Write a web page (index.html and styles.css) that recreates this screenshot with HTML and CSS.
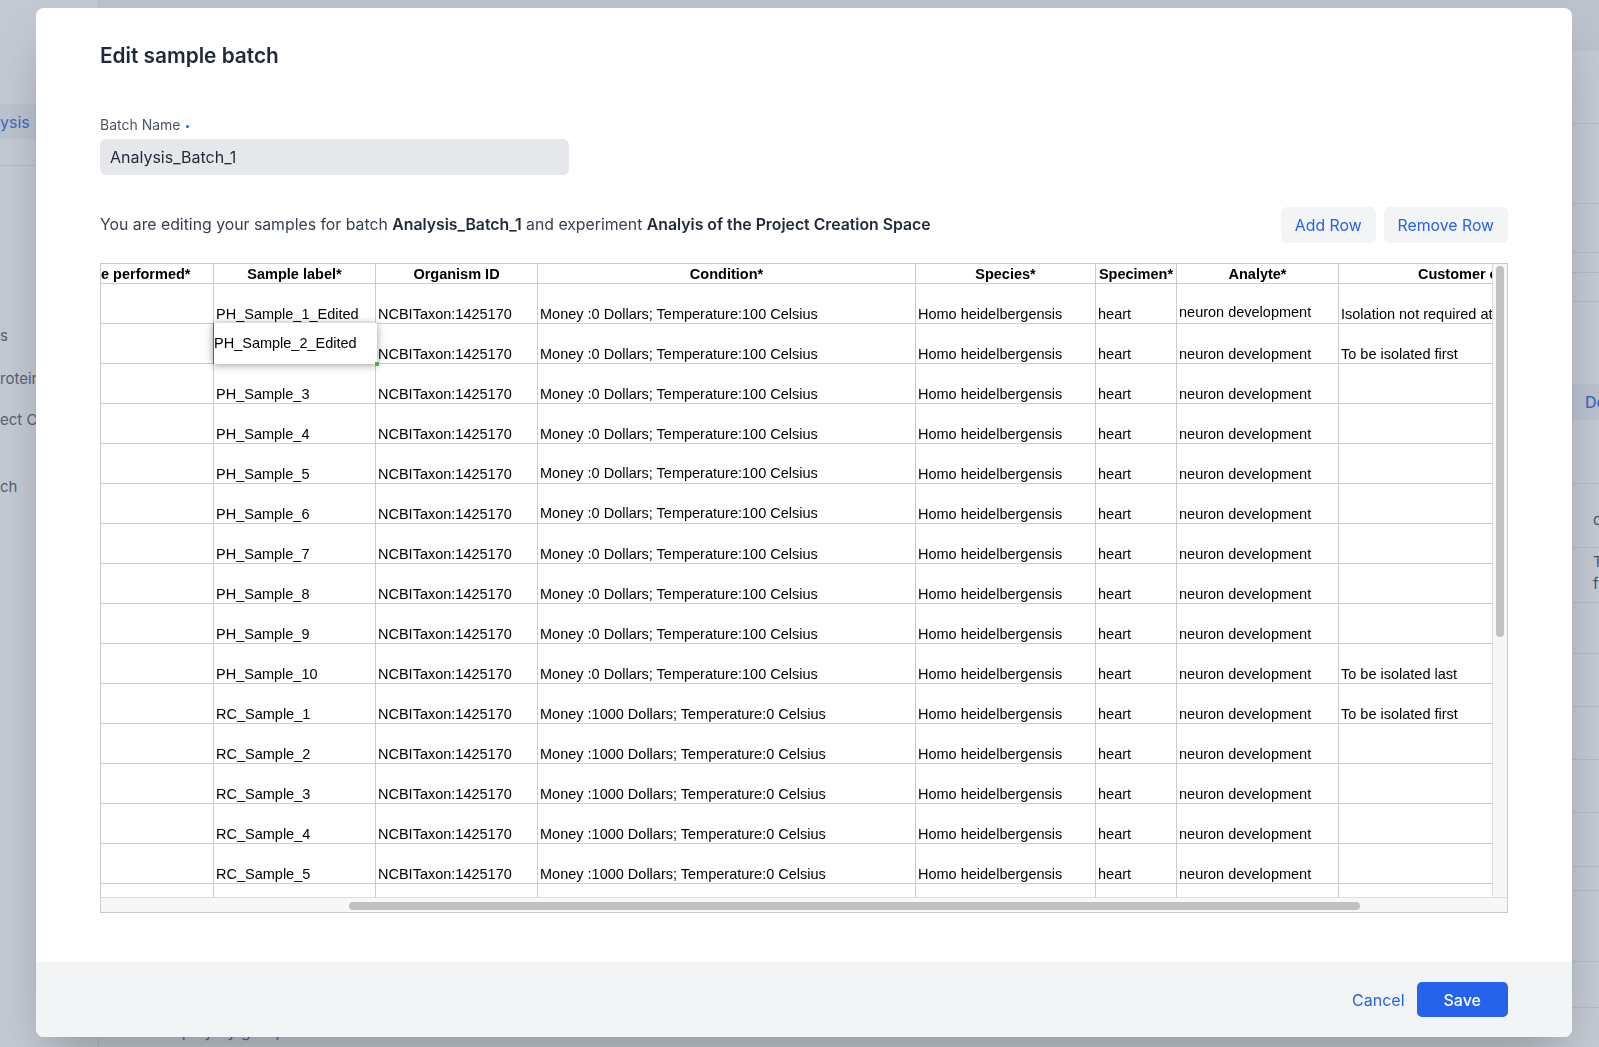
FILE: index.html
```html
<!DOCTYPE html>
<html lang="en">
<head>
<meta charset="utf-8">
<title>Edit sample batch</title>
<link rel="stylesheet" href="styles.css">
</head>
<body>
<div class="page">
  <aside class="sidebar">
    <div class="side-top"></div>
    <div class="side-item active">ysis (</div>
    <div class="side-sep"></div>
    <div class="side-text s1">s</div>
    <div class="side-text s2">rotein</div>
    <div class="side-text s3">ect C</div>
    <div class="side-text s4">ch</div>
  </aside>
  <main class="main">
    <div class="topbar"></div>
    <div class="main-body">
      <div class="main-center">
        <div class="bottom-link">Display by group</div>
      </div>
      <div class="rp">
        <div class="rp-row h73"></div>
        <div class="rp-row h80"></div>
        <div class="rp-row h49"></div>
        <div class="rp-row h20"></div>
        <div class="rp-row h29"></div>
        <div class="rp-gap"></div>
        <div class="rp-band">De</div>
        <div class="rp-row h64"></div>
        <div class="rp-row h64 rp-text">c</div>
        <div class="rp-row h55 rp-two"><div>T</div><div>f</div></div>
        <div class="rp-row h51"></div>
        <div class="rp-row h53"></div>
        <div class="rp-row h53"></div>
        <div class="rp-row h53"></div>
        <div class="rp-row h54"></div>
        <div class="rp-row h24"></div>
        <div class="rp-row h71"></div>
        <div class="rp-row h46"></div>
      </div>
    </div>
  </main>
</div>

<div class="backdrop"></div>

<div class="modal">
  <div class="modal-body">
    <h1 class="title">Edit sample batch</h1>

    <div class="field">
      <div class="label">Batch Name <span class="req-dot"></span></div>
      <div class="input">Analysis_Batch_1</div>
    </div>

    <div class="toolbar">
      <p class="desc">You are editing your samples for batch <b>Analysis_Batch_1</b> and experiment <b>Analyis of the Project Creation Space</b></p>
      <div class="actions">
        <button class="btn-soft">Add Row</button>
        <button class="btn-soft">Remove Row</button>
      </div>
    </div>

    <div class="grid">
      <div class="viewport">
        <div class="rows">
          <div class="row head">
            <div class="c first">e performed*</div>
            <div class="c">Sample label*</div>
            <div class="c">Organism ID</div>
            <div class="c">Condition*</div>
            <div class="c">Species*</div>
            <div class="c">Specimen*</div>
            <div class="c">Analyte*</div>
            <div class="c">Customer comment</div>
          </div>
          <div class="row">
            <div class="c"></div>
            <div class="c">PH_Sample_1_Edited</div>
            <div class="c">NCBITaxon:1425170</div>
            <div class="c">Money :0 Dollars; Temperature:100 Celsius</div>
            <div class="c">Homo heidelbergensis</div>
            <div class="c">heart</div>
            <div class="c up">neuron development</div>
            <div class="c">Isolation not required at this stage</div>
          </div>
          <div class="row">
            <div class="c"></div>
            <div class="c"></div>
            <div class="c">NCBITaxon:1425170</div>
            <div class="c">Money :0 Dollars; Temperature:100 Celsius</div>
            <div class="c">Homo heidelbergensis</div>
            <div class="c">heart</div>
            <div class="c">neuron development</div>
            <div class="c">To be isolated first</div>
          </div>
          <div class="row">
            <div class="c"></div>
            <div class="c">PH_Sample_3</div>
            <div class="c">NCBITaxon:1425170</div>
            <div class="c">Money :0 Dollars; Temperature:100 Celsius</div>
            <div class="c">Homo heidelbergensis</div>
            <div class="c">heart</div>
            <div class="c">neuron development</div>
            <div class="c"></div>
          </div>
          <div class="row">
            <div class="c"></div>
            <div class="c">PH_Sample_4</div>
            <div class="c">NCBITaxon:1425170</div>
            <div class="c">Money :0 Dollars; Temperature:100 Celsius</div>
            <div class="c">Homo heidelbergensis</div>
            <div class="c">heart</div>
            <div class="c">neuron development</div>
            <div class="c"></div>
          </div>
          <div class="row">
            <div class="c"></div>
            <div class="c">PH_Sample_5</div>
            <div class="c">NCBITaxon:1425170</div>
            <div class="c up1">Money :0 Dollars; Temperature:100 Celsius</div>
            <div class="c">Homo heidelbergensis</div>
            <div class="c">heart</div>
            <div class="c">neuron development</div>
            <div class="c"></div>
          </div>
          <div class="row">
            <div class="c"></div>
            <div class="c">PH_Sample_6</div>
            <div class="c">NCBITaxon:1425170</div>
            <div class="c up1">Money :0 Dollars; Temperature:100 Celsius</div>
            <div class="c">Homo heidelbergensis</div>
            <div class="c">heart</div>
            <div class="c">neuron development</div>
            <div class="c"></div>
          </div>
          <div class="row">
            <div class="c"></div>
            <div class="c">PH_Sample_7</div>
            <div class="c">NCBITaxon:1425170</div>
            <div class="c">Money :0 Dollars; Temperature:100 Celsius</div>
            <div class="c">Homo heidelbergensis</div>
            <div class="c">heart</div>
            <div class="c">neuron development</div>
            <div class="c"></div>
          </div>
          <div class="row">
            <div class="c"></div>
            <div class="c">PH_Sample_8</div>
            <div class="c">NCBITaxon:1425170</div>
            <div class="c">Money :0 Dollars; Temperature:100 Celsius</div>
            <div class="c">Homo heidelbergensis</div>
            <div class="c">heart</div>
            <div class="c">neuron development</div>
            <div class="c"></div>
          </div>
          <div class="row">
            <div class="c"></div>
            <div class="c">PH_Sample_9</div>
            <div class="c">NCBITaxon:1425170</div>
            <div class="c">Money :0 Dollars; Temperature:100 Celsius</div>
            <div class="c">Homo heidelbergensis</div>
            <div class="c">heart</div>
            <div class="c">neuron development</div>
            <div class="c"></div>
          </div>
          <div class="row">
            <div class="c"></div>
            <div class="c">PH_Sample_10</div>
            <div class="c">NCBITaxon:1425170</div>
            <div class="c">Money :0 Dollars; Temperature:100 Celsius</div>
            <div class="c">Homo heidelbergensis</div>
            <div class="c">heart</div>
            <div class="c">neuron development</div>
            <div class="c">To be isolated last</div>
          </div>
          <div class="row">
            <div class="c"></div>
            <div class="c">RC_Sample_1</div>
            <div class="c">NCBITaxon:1425170</div>
            <div class="c">Money :1000 Dollars; Temperature:0 Celsius</div>
            <div class="c">Homo heidelbergensis</div>
            <div class="c">heart</div>
            <div class="c">neuron development</div>
            <div class="c">To be isolated first</div>
          </div>
          <div class="row">
            <div class="c"></div>
            <div class="c">RC_Sample_2</div>
            <div class="c">NCBITaxon:1425170</div>
            <div class="c">Money :1000 Dollars; Temperature:0 Celsius</div>
            <div class="c">Homo heidelbergensis</div>
            <div class="c">heart</div>
            <div class="c">neuron development</div>
            <div class="c"></div>
          </div>
          <div class="row">
            <div class="c"></div>
            <div class="c">RC_Sample_3</div>
            <div class="c">NCBITaxon:1425170</div>
            <div class="c">Money :1000 Dollars; Temperature:0 Celsius</div>
            <div class="c">Homo heidelbergensis</div>
            <div class="c">heart</div>
            <div class="c">neuron development</div>
            <div class="c"></div>
          </div>
          <div class="row">
            <div class="c"></div>
            <div class="c">RC_Sample_4</div>
            <div class="c">NCBITaxon:1425170</div>
            <div class="c">Money :1000 Dollars; Temperature:0 Celsius</div>
            <div class="c">Homo heidelbergensis</div>
            <div class="c">heart</div>
            <div class="c">neuron development</div>
            <div class="c"></div>
          </div>
          <div class="row">
            <div class="c"></div>
            <div class="c">RC_Sample_5</div>
            <div class="c">NCBITaxon:1425170</div>
            <div class="c">Money :1000 Dollars; Temperature:0 Celsius</div>
            <div class="c">Homo heidelbergensis</div>
            <div class="c">heart</div>
            <div class="c">neuron development</div>
            <div class="c"></div>
          </div>
          <div class="row">
            <div class="c"></div>
            <div class="c"></div>
            <div class="c"></div>
            <div class="c"></div>
            <div class="c"></div>
            <div class="c"></div>
            <div class="c"></div>
            <div class="c"></div>
          </div>
        </div>
        <div class="editor">PH_Sample_2_Edited</div>
      </div>
      <div class="vscroll"><div class="vthumb"></div></div>
      <div class="hscroll"><div class="hthumb"></div></div>
    </div>
  </div>

  <div class="footer">
    <button class="btn-link">Cancel</button>
    <button class="btn-primary">Save</button>
  </div>
</div>
</body>
</html>
```

FILE: styles.css
```css
* {
  box-sizing: border-box;
  margin: 0;
  padding: 0;
}

html,
body {
  width: 1599px;
  height: 1047px;
  overflow: hidden;
}

body {
  font-family: Inter, "Noto Sans", sans-serif;
  background: #ffffff;
  color: #1f2937;
}

/* ---------- background page ---------- */
.page {
  display: flex;
  width: 1599px;
  height: 1047px;
}

.sidebar {
  flex: 0 0 99px;
  background: #ffffff;
  border-right: 1px solid #e5e7eb;
  overflow: hidden;
  white-space: nowrap;
}

.side-top {
  height: 104px;
}

.side-item {
  height: 35px;
  line-height: 36px;
  font-size: 16px;
}

.side-item.active {
  background: #f1f3f9;
  color: #2563eb;
}

.side-sep {
  margin-top: 26px;
  border-top: 1px solid #e5e7eb;
}

.side-text {
  font-size: 15px;
  line-height: 20px;
  color: #4b5563;
}

.s1 { margin-top: 160px; }
.s2 { margin-top: 23px; }
.s3 { margin-top: 21px; }
.s4 { margin-top: 47px; }

.main {
  flex: 1;
  display: flex;
  flex-direction: column;
  min-width: 0;
}

.topbar {
  flex: 0 0 51px;
  background: #f3f4f6;
}

.main-body {
  flex: 1;
  display: flex;
}

.main-center {
  flex: 1;
  display: flex;
  flex-direction: column;
  justify-content: flex-end;
  padding: 0 0 7px 59px;
}

.bottom-link {
  font-size: 16px;
  line-height: 18px;
  color: #2563eb;
}

.rp {
  flex: 0 0 39px;
  overflow: hidden;
  white-space: nowrap;
  background: #ffffff;
}

.rp-row {
  border-bottom: 1px solid #e5e7eb;
}

.h20 { height: 20px; }
.h24 { height: 24px; }
.h29 { height: 29px; }
.h46 { height: 46px; }
.h49 { height: 49px; }
.h51 { height: 51px; }
.h53 { height: 53px; }
.h54 { height: 54px; }
.h55 { height: 55px; }
.h64 { height: 64px; }
.h71 { height: 71px; }
.h73 { height: 73px; }
.h80 { height: 80px; }

.rp-gap {
  height: 82px;
}

.rp-band {
  height: 36px;
  line-height: 36px;
  padding-left: 25px;
  background: #f1f3f9;
  color: #2563eb;
  font-size: 16px;
  font-weight: 500;
}

.rp-text {
  display: flex;
  align-items: center;
  padding: 7px 0 0 33px;
  font-size: 15px;
  color: #374151;
}

.rp-two {
  padding: 3px 0 0 33px;
  font-size: 15px;
  line-height: 22px;
  color: #374151;
}

/* ---------- overlay + modal ---------- */
.backdrop {
  position: fixed;
  inset: 0;
  background: rgba(100, 116, 139, 0.38);
}

.modal {
  position: fixed;
  left: 36px;
  top: 8px;
  width: 1536px;
  background: #ffffff;
  border-radius: 8px;
  overflow: hidden;
  box-shadow: 0 25px 50px -12px rgba(0, 0, 0, 0.28);
}

.modal-body {
  padding: 32px 64px 49px;
}

.title {
  font-size: 20.8px;
  line-height: 32px;
  font-weight: 600;
  color: #1f2937;
}

.field {
  margin-top: 43px;
}

.label {
  display: flex;
  align-items: center;
  gap: 5px;
  font-size: 14px;
  line-height: 20px;
  color: #4b5563;
}

.req-dot {
  width: 3px;
  height: 3px;
  margin-top: 3px;
  border-radius: 50%;
  background: #2563eb;
}

.input {
  margin-top: 4px;
  width: 469px;
  height: 36px;
  padding: 0 10px;
  border-radius: 6px;
  background: #e5e7eb;
  font-size: 16px;
  line-height: 36px;
  color: #1f2937;
}

.toolbar {
  margin-top: 32px;
  height: 36px;
  display: flex;
  align-items: center;
  justify-content: space-between;
}

.desc {
  font-size: 15.8px;
  line-height: 24px;
  color: #374151;
}

.desc b {
  font-weight: 600;
  color: #1f2937;
}

.actions {
  display: flex;
  gap: 8px;
}

.btn-soft {
  height: 36px;
  padding: 0 14px;
  border: none;
  border-radius: 6px;
  background: #f3f4f6;
  color: #2563eb;
  font-family: Inter, "Noto Sans", sans-serif;
  font-size: 15.8px;
}

/* ---------- spreadsheet ---------- */
.grid {
  margin-top: 20px;
  height: 650px;
  border: 1px solid #cccccc;
  display: grid;
  grid-template-columns: 1fr 15px;
  grid-template-rows: 1fr 15px;
  background: #f7f7f7;
}

.viewport {
  position: relative;
  overflow: hidden;
  background: #ffffff;
}

.rows {
  width: max-content;
}

.row {
  display: grid;
  grid-template-columns: 113px 162px 162px 378px 180px 81px 162px 295px;
  height: 40px;
}

.row.head {
  height: 20px;
}

.c {
  display: flex;
  align-items: flex-end;
  padding: 0 2px 1px;
  border-right: 1px solid #cccccc;
  border-bottom: 1px solid #cccccc;
  overflow: hidden;
  white-space: nowrap;
  font-family: "Liberation Sans", Arial, sans-serif;
  font-size: 14.5px;
  line-height: 16px;
  color: #000000;
}

.c.up {
  padding-bottom: 3px;
}

.c.up1 {
  padding-bottom: 2px;
}

.head .c {
  align-items: center;
  justify-content: center;
  padding: 0;
  font-weight: 700;
  background: #ffffff;
}

.head .c.first {
  justify-content: flex-start;
  padding-left: 0;
}

.editor {
  position: absolute;
  left: 112px;
  top: 59px;
  width: 164px;
  height: 41px;
  padding: 11px 0 0 0;
  background: #ffffff;
  border-left: 1px solid #3b63b0;
  box-shadow: 0 1px 8px rgba(0, 0, 0, 0.4);
  font-family: "Liberation Sans", Arial, sans-serif;
  font-size: 14.5px;
  line-height: 19px;
  color: #000000;
  white-space: nowrap;
}

.editor::after {
  content: "";
  position: absolute;
  right: -2px;
  bottom: -2px;
  width: 4px;
  height: 4px;
  background: #4caf50;
}

.vscroll {
  border-left: 1px solid #dddddd;
  background: #f7f7f7;
  padding: 2px 0 0 3px;
}

.vthumb {
  width: 8px;
  height: 371px;
  border-radius: 4px;
  background: #c1c1c1;
}

.hscroll {
  grid-column: 1 / span 2;
  border-top: 1px solid #dddddd;
  background: #f7f7f7;
  padding: 4px 0 0 248px;
}

.hthumb {
  width: 1011px;
  height: 8px;
  border-radius: 4px;
  background: #c1c1c1;
}

/* ---------- footer ---------- */
.footer {
  height: 75px;
  padding-right: 64px;
  display: flex;
  align-items: center;
  justify-content: flex-end;
  background: #f3f4f6;
}

.btn-link {
  height: 35px;
  padding: 0 12px 0 15px;
  border: none;
  background: none;
  color: #2563eb;
  font-family: Inter, "Noto Sans", sans-serif;
  font-size: 16px;
}

.btn-primary {
  height: 35px;
  padding: 0 27px;
  border: none;
  border-radius: 5px;
  background: #2563eb;
  color: #ffffff;
  font-family: Inter, "Noto Sans", sans-serif;
  font-size: 16px;
  font-weight: 500;
}
```
